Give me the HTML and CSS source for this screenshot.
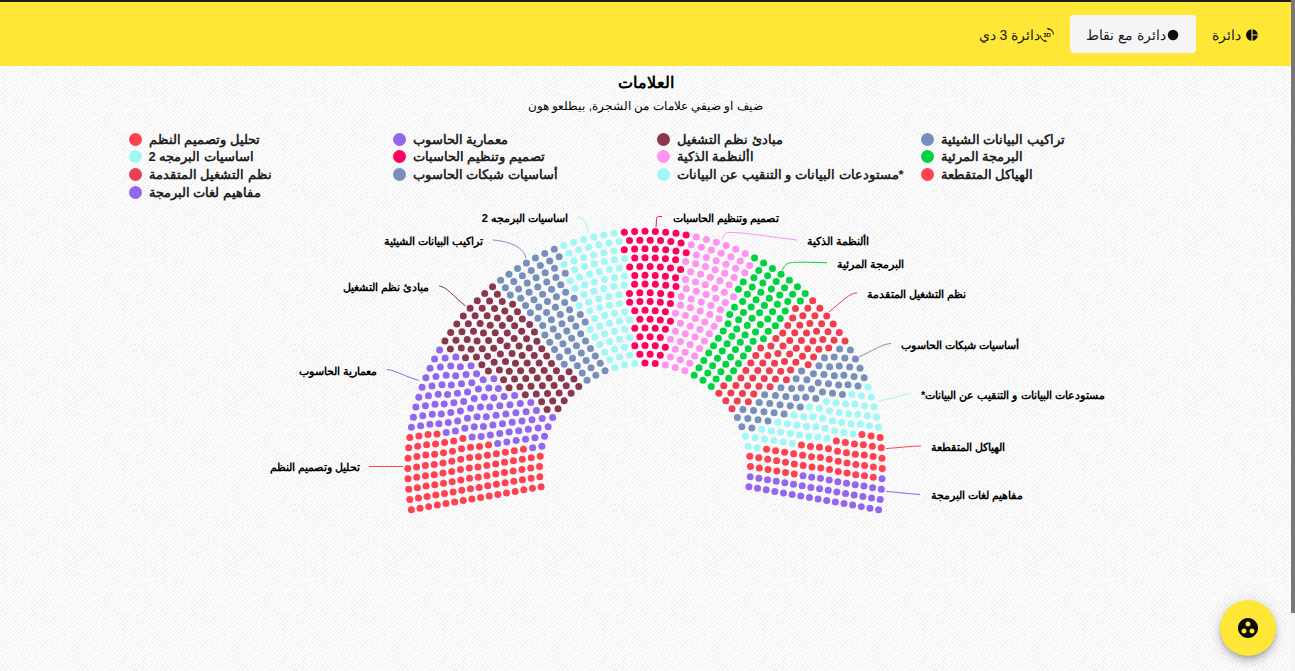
FILE: index.html
```html
<!DOCTYPE html>
<html lang="ar">
<head>
<meta charset="utf-8">
<title>العلامات</title>
<link rel="stylesheet" href="styles.css">
</head>
<body>
<header class="topbar">
  <nav class="tabs">
    <button class="tab" type="button">
      <span dir="rtl">دائرة 3 دي</span>
      <svg class="icon" viewBox="0 0 24 24" aria-hidden="true">
        <path d="M7.52 21.48C4.25 19.94 1.91 16.76 1.55 13H.05C.56 19.16 5.71 24 12 24l.66-.03-3.81-3.81-1.33 1.32z"/>
        <path d="M12 0l-.66.03 3.81 3.81 1.33-1.33c3.27 1.55 5.61 4.72 5.96 8.48h1.5C23.44 4.84 18.29 0 12 0z"/>
        <text class="icon-text" x="12" y="16" text-anchor="middle">3D</text>
      </svg>
    </button>
    <button class="tab tab-active" type="button">
      <span>دائرة مع نقاط</span>
      <svg class="icon" viewBox="0 0 24 24" aria-hidden="true"><circle cx="12" cy="12" r="9"/></svg>
    </button>
    <button class="tab tab-pie" type="button">
      <span>دائرة</span>
      <svg class="icon" viewBox="0 0 24 24" aria-hidden="true"><path d="M11 2v20c-5.07-.5-9-4.79-9-10s3.93-9.5 9-10zm2.03 0v8.99H22c-.47-4.74-4.24-8.52-8.97-8.99zm0 11.01V22c4.74-.47 8.5-4.25 8.97-8.99h-8.97z"/></svg>
    </button>
  </nav>
</header>

<main class="content">
  <h1 class="title">العلامات</h1>
  <p class="subtitle" dir="rtl">ضيف او ضيفي علامات من الشجرة, بيطلعو هون</p>

  <ul class="legend">
    <li class="legend-item"><span class="dot red"></span>تحليل وتصميم النظم</li>
    <li class="legend-item"><span class="dot purple"></span>معمارية الحاسوب</li>
    <li class="legend-item"><span class="dot maroon"></span>مبادئ نظم التشغيل</li>
    <li class="legend-item"><span class="dot blue"></span>تراكيب البيانات الشيئية</li>
    <li class="legend-item"><span class="dot cyan"></span>اساسيات البرمجه 2</li>
    <li class="legend-item"><span class="dot crimson"></span>تصميم وتنظيم الحاسبات</li>
    <li class="legend-item"><span class="dot pink"></span>األنظمة الذكية</li>
    <li class="legend-item"><span class="dot green"></span>البرمجة المرئية</li>
    <li class="legend-item"><span class="dot brick"></span>نظم التشغيل المتقدمة</li>
    <li class="legend-item"><span class="dot blue"></span>أساسيات شبكات الحاسوب</li>
    <li class="legend-item"><span class="dot cyan"></span>مستودعات البيانات و التنقيب عن البيانات*</li>
    <li class="legend-item"><span class="dot red"></span>الهياكل المتقطعة</li>
    <li class="legend-item"><span class="dot purple"></span>مفاهيم لغات البرمجة</li>
  </ul>

  <svg class="chart" viewBox="196 202 900 320" role="img" aria-label="العلامات">
    <g id="seats"></g>
    <g class="connectors">
      <path class="red" d="M369 466.5H403"/>
      <path class="purple" d="M387 369.5C395 370 406 377 419 380.5"/>
      <path class="maroon" d="M439 286C447 287 453 296 465.5 306"/>
      <path class="blue" d="M493 240C505 241 523 245 526 258"/>
      <path class="cyan" d="M577 217C583 217 587 222 588.5 233"/>
      <path class="crimson" d="M662 216.5C655 216 657 218 656 227"/>
      <path class="pink" d="M797 240C770 237 745 232 728 232.5C724 233 724 236 722.5 239"/>
      <path class="green" d="M827 262.7C800 262 795 262 789 263C785 264 784 267 782 270"/>
      <path class="brick" d="M857 293C851 292 840 303 829 312"/>
      <path class="blue" d="M891 343.5C882 344 872 351 859 357"/>
      <path class="cyan" d="M911 393.5C902 395 893 398 878 401.5"/>
      <path class="red" d="M921 446C910 446 897 448 886 448.5"/>
      <path class="purple" d="M920 494.5C909 494 897 492 886 491.5"/>
    </g>
    <g class="labels">
      <text x="360" y="471">تحليل وتصميم النظم</text>
      <text x="377" y="375">معمارية الحاسوب</text>
      <text x="429" y="291">مبادئ نظم التشغيل</text>
      <text x="483" y="245">تراكيب البيانات الشيئية</text>
      <text x="568" y="222">اساسيات البرمجه 2</text>
    </g>
    <g class="labels labels-right">
      <text x="673" y="222">تصميم وتنظيم الحاسبات</text>
      <text x="807" y="245">األنظمة الذكية</text>
      <text x="837" y="268">البرمجة المرئية</text>
      <text x="867" y="298">نظم التشغيل المتقدمة</text>
      <text x="901" y="349">أساسيات شبكات الحاسوب</text>
      <text x="921" y="399">مستودعات البيانات و التنقيب عن البيانات*</text>
      <text x="931" y="451">الهياكل المتقطعة</text>
      <text x="931" y="499">مفاهيم لغات البرمجة</text>
    </g>
  </svg>
</main>

<button class="fab" type="button" aria-label="العلامات">
  <svg class="fab-icon" viewBox="0 0 24 24" aria-hidden="true"><path d="M12 2C6.48 2 2 6.48 2 12s4.48 10 10 10 10-4.48 10-10S17.52 2 12 2zM8 17.5c-1.38 0-2.5-1.12-2.5-2.5s1.12-2.5 2.5-2.5 2.5 1.12 2.5 2.5-1.12 2.5-2.5 2.5zM9.5 8c0-1.38 1.12-2.5 2.5-2.5s2.5 1.12 2.5 2.5-1.12 2.5-2.5 2.5S9.5 9.38 9.5 8zm6.5 9.5c-1.38 0-2.5-1.12-2.5-2.5s1.12-2.5 2.5-2.5 2.5 1.12 2.5 2.5-1.12 2.5-2.5 2.5z"/></svg>
</button>
<div class="scroll-track"><div class="scroll-thumb"></div></div>
<script src="chart.js"></script>
</body>
</html>
```

FILE: styles.css
```css
* { box-sizing: border-box; }

body {
  margin: 0;
  min-height: 100vh;
  padding-right: 4px;
  font-family: "Liberation Sans", sans-serif;
  color: #000;
  background-color: #fdfdfd;
  background-image:
    url("data:image/svg+xml,%3Csvg xmlns='http://www.w3.org/2000/svg' width='160' height='160'%3E%3Cfilter id='n' x='0' y='0' width='1' height='1'%3E%3CfeTurbulence type='fractalNoise' baseFrequency='.9' numOctaves='2' stitchTiles='stitch'/%3E%3CfeColorMatrix values='0 0 0 0 .4 0 0 0 0 .4 0 0 0 0 .4 0 0 0 2.4 -1.35'/%3E%3C/filter%3E%3Crect width='160' height='160' filter='url(%23n)' opacity='.4'/%3E%3C/svg%3E"),
    url("data:image/svg+xml,%3Csvg xmlns='http://www.w3.org/2000/svg' width='4' height='4' shape-rendering='crispEdges' fill='%23f2f2f2'%3E%3Cpath d='M3 0h1v1h-1zM2 1h1v1h-1zM1 2h1v1h-1zM0 3h1v1h-1z'/%3E%3C/svg%3E");
}

.red { --c: #ff4252; }
.purple { --c: #9466ed; }
.maroon { --c: #8a374e; }
.blue { --c: #778fbb; }
.cyan { --c: #a0f8f6; }
.crimson { --c: #ff0060; }
.pink { --c: #ff93f0; }
.green { --c: #00d340; }
.brick { --c: #ee3e50; }

.topbar {
  border-top: 2px solid #1d1d1b;
  background: #ffe737;
  height: 66px;
  display: flex;
  align-items: center;
  justify-content: flex-end;
  padding-right: 16px;
}
.tabs { display: flex; align-items: center; }
.tab {
  display: flex;
  align-items: center;
  height: 38px;
  padding: 2px 16px 0;
  border: 0;
  border-radius: 4px;
  background: none;
  font-family: inherit;
  font-size: 14px;
  color: #1a1a1a;
}
.tab-active { background: #f5f5f5; }
.tab-pie { gap: 4px; }
.icon { width: 14px; height: 14px; fill: #0d0d0d; }
.icon-text { font: bold 10px "Liberation Sans", sans-serif; }

.content { text-align: center; }
.title { margin: 0; padding-top: 6px; font-size: 16px; line-height: 22px; font-weight: 700; }
.subtitle { margin: 0; font-size: 12px; line-height: 24px; }

.legend {
  list-style: none;
  width: 100%;
  max-width: 1056px;
  margin: 13px auto 0;
  padding: 0;
  display: grid;
  grid-template-columns: repeat(4, minmax(0, 1fr));
  grid-template-rows: 16px;
  grid-auto-rows: 18px;
  font-size: 13px;
  font-weight: 700;
  color: #222;
}
.legend-item { display: flex; align-items: center; gap: 7px; padding-left: 11px; white-space: nowrap; }
.dot { width: 13px; height: 13px; border-radius: 50%; background: var(--c); }

.chart { display: block; width: 100%; max-width: 900px; margin: 1px auto 0; overflow: visible; }
.seat { fill: var(--c); }
.connectors path { fill: none; stroke: var(--c); stroke-width: 1; }
.labels { font-size: 11px; font-weight: 700; direction: rtl; text-anchor: start; }
.labels-right { text-anchor: end; }

.fab {
  position: fixed;
  right: 19px;
  bottom: 15px;
  width: 56px;
  height: 56px;
  border: 0;
  border-radius: 50%;
  padding: 0;
  display: flex;
  align-items: center;
  justify-content: center;
  background: #ffe737;
  box-shadow: 0 3px 5px -1px rgba(0,0,0,.2), 0 6px 10px 0 rgba(0,0,0,.14), 0 1px 18px 0 rgba(0,0,0,.12);
}
.fab-icon { width: 24px; height: 24px; fill: #0a0a0a; }

.scroll-track { position: fixed; top: 0; right: 0; bottom: 0; width: 4px; background: #f5f5f5; }
.scroll-thumb { height: 91.4%; background: #777; }
```

FILE: chart.js
```js
// Parliament chart: 16 concentric arcs spanning 200 degrees.
// Each series fills the arcs up to its "until" angle.
const center = { x: 645, y: 468.5 };
const outerRadius = 237.2;
const rowStep = 8.78;
const sweep = 200;
const columns = [80, 77, 74, 72, 69, 66, 62, 59, 57, 54, 51, 48, 45, 42, 39, 36];
const series = [
  { color: 'red', until: 19.5 },
  { color: 'purple', until: 40.7 },
  { color: 'maroon', until: 62 },
  { color: 'blue', until: 77.95 },
  { color: 'cyan', until: 94.5 },
  { color: 'crimson', until: 111 },
  { color: 'pink', until: 127.4 },
  { color: 'green', until: 143 },
  { color: 'brick', until: 158 },
  { color: 'blue', until: 169.47 },
  { color: 'cyan', until: 180.8 },
  { color: 'red', until: 192.4 },
  { color: 'purple', until: 201 }
];
const seats = document.getElementById('seats');
columns.forEach((count, row) => {
  const radius = outerRadius - row * rowStep;
  for (let col = 0; col <= count; col++) {
    const angle = sweep * col / count;
    const rad = (angle + 170) * Math.PI / 180;
    const seat = document.createElementNS('http://www.w3.org/2000/svg', 'circle');
    seat.setAttribute('cx', (center.x + Math.cos(rad) * radius).toFixed(2));
    seat.setAttribute('cy', (center.y + Math.sin(rad) * radius).toFixed(2));
    seat.setAttribute('r', 3.5);
    seat.setAttribute('class', 'seat ' + series.find(s => angle < s.until).color);
    seats.appendChild(seat);
  }
});
```
